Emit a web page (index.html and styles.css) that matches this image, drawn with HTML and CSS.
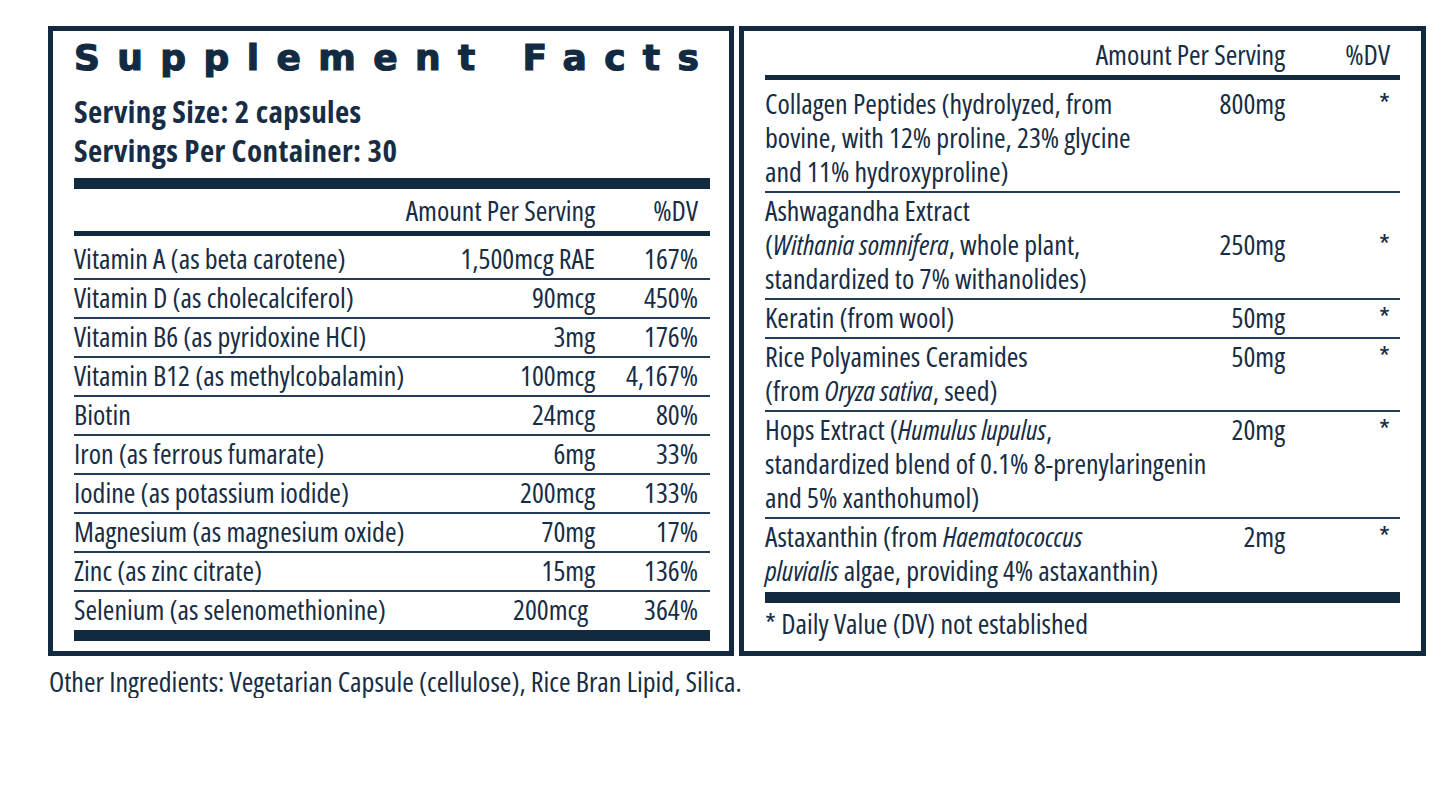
FILE: index.html
```html
<!DOCTYPE html>
<html lang="en">
<head>
<meta charset="utf-8">
<title>Supplement Facts</title>
<link rel="stylesheet" href="styles.css">
</head>
<body>
<div class="page">
  <div class="panels">
    <section class="panel left">
      <h1 class="title">Supplement Facts</h1>
      <div class="serving first">Serving Size: 2 capsules</div>
      <div class="serving">Servings Per Container: 30</div>
      <div class="bar thick top-bar"></div>
      <div class="head">
        <span class="head-amt">Amount Per Serving</span>
        <span class="dv">%DV</span>
      </div>
      <div class="bar mid"></div>
      <div class="rows">
        <div class="row first-row"><span class="name">Vitamin A (as beta carotene)</span><span class="amt">1,500mcg RAE</span><span class="dv">167%</span></div>
        <div class="row"><span class="name">Vitamin D (as cholecalciferol)</span><span class="amt">90mcg</span><span class="dv">450%</span></div>
        <div class="row"><span class="name">Vitamin B6 (as pyridoxine HCl)</span><span class="amt">3mg</span><span class="dv">176%</span></div>
        <div class="row"><span class="name">Vitamin B12 (as methylcobalamin)</span><span class="amt">100mcg</span><span class="dv">4,167%</span></div>
        <div class="row"><span class="name">Biotin</span><span class="amt">24mcg</span><span class="dv">80%</span></div>
        <div class="row"><span class="name">Iron (as ferrous fumarate)</span><span class="amt">6mg</span><span class="dv">33%</span></div>
        <div class="row"><span class="name">Iodine (as potassium iodide)</span><span class="amt">200mcg</span><span class="dv">133%</span></div>
        <div class="row"><span class="name">Magnesium (as magnesium oxide)</span><span class="amt">70mg</span><span class="dv">17%</span></div>
        <div class="row"><span class="name">Zinc (as zinc citrate)</span><span class="amt">15mg</span><span class="dv">136%</span></div>
        <div class="row last-row"><span class="name">Selenium (as selenomethionine)</span><span class="amt shifted">200mcg</span><span class="dv">364%</span></div>
      </div>
      <div class="bar thick"></div>
    </section>

    <section class="panel right">
      <div class="head">
        <span class="head-amt">Amount Per Serving</span>
        <span class="dv">%DV</span>
      </div>
      <div class="bar mid"></div>
      <div class="rows">
        <div class="row first-row"><span class="name">Collagen Peptides (hydrolyzed, from<br>bovine, with 12% proline, 23% glycine<br>and 11% hydroxyproline)</span><span class="amt">800mg</span><span class="dv">*</span></div>
        <div class="row centered"><span class="name">Ashwagandha Extract<br>(<em>Withania somnifera</em>, whole plant,<br>standardized to 7% withanolides)</span><span class="amt">250mg</span><span class="dv">*</span></div>
        <div class="row"><span class="name">Keratin (from wool)</span><span class="amt">50mg</span><span class="dv">*</span></div>
        <div class="row"><span class="name">Rice Polyamines Ceramides<br>(from <em>Oryza sativa</em>, seed)</span><span class="amt">50mg</span><span class="dv">*</span></div>
        <div class="row"><span class="name">Hops Extract (<em>Humulus lupulus</em>,<br>standardized blend of 0.1% 8-prenylaringenin<br>and 5% xanthohumol)</span><span class="amt">20mg</span><span class="dv">*</span></div>
        <div class="row last-row"><span class="name">Astaxanthin (from <em>Haematococcus</em><br><em>pluvialis</em> algae, providing 4% astaxanthin)</span><span class="amt">2mg</span><span class="dv">*</span></div>
      </div>
      <div class="bar thick"></div>
      <p class="note">* Daily Value (DV) not established</p>
    </section>
  </div>
  <p class="other">Other Ingredients: Vegetarian Capsule (cellulose), Rice Bran Lipid, Silica.</p>
</div>
</body>
</html>
```

FILE: styles.css
```css
html, body {
  margin: 0;
  padding: 0;
  background: #ffffff;
}

body {
  color: #172d45;
  font-family: "Open Sans", "Liberation Sans Narrow", "DejaVu Sans Condensed", sans-serif;
  font-stretch: 75%;
  font-size: 28px;
  line-height: 34px;
}

.page {
  padding: 26px 0 0 48px;
}

.panels {
  display: flex;
  gap: 5px;
  align-items: stretch;
}

.panel {
  box-sizing: border-box;
  border: 5px solid #112a40;
  display: flex;
  flex-direction: column;
}

.left {
  width: 686px;
  padding: 7px 19px 10px 21px;
}

.right {
  width: 687px;
  padding: 6px 21px 11px 21px;
}

.title {
  margin: 0;
  font-family: "DejaVu Sans", "Liberation Sans", sans-serif;
  font-stretch: 100%;
  font-weight: 700;
  font-size: 36px;
  line-height: 40px;
  letter-spacing: 17.4px;
  -webkit-text-stroke: 1.2px #132b42;
  white-space: nowrap;
  color: #132b42;
}

.serving {
  font-weight: 700;
  font-size: 31px;
  letter-spacing: 0.4px;
  line-height: 39px;
  white-space: nowrap;
}

.serving.first {
  margin-top: 14px;
}

.bar {
  background: #112a40;
  flex: none;
}

.bar.thick {
  height: 11px;
}

.top-bar {
  margin-top: 8px;
}

.bar.mid {
  height: 5px;
  margin-top: 4px;
}

.left .head {
  margin-top: 4px;
}

.head {
  display: flex;
  white-space: nowrap;
}

.head-amt {
  flex: 1;
  text-align: right;
}

.dv {
  flex: none;
  width: 115px;
  text-align: right;
  box-sizing: border-box;
}

.left .dv {
  padding-right: 12px;
}

.right .dv {
  padding-right: 10px;
}

.row {
  display: flex;
  align-items: flex-start;
  padding: 0 0 3px;
  border-bottom: 2px solid #243b55;
  white-space: nowrap;
}

.row.first-row {
  padding-top: 5px;
}

.right .row.first-row {
  padding-top: 6px;
}

.row.last-row {
  border-bottom: none;
  padding-bottom: 4px;
}

.right .row.last-row {
  padding-bottom: 5px;
}

.row.centered {
  align-items: center;
}

.name {
  flex: 1;
}

.amt {
  flex: none;
  text-align: right;
}

.left .amt {
  width: 180px;
}

.right .amt {
  width: 72px;
}

.amt.shifted {
  padding-right: 7px;
}

em {
  font-style: italic;
}

.note {
  margin: 3px 0 0;
}

.other {
  margin: 8px 0 0 1px;
  white-space: nowrap;
}
```
